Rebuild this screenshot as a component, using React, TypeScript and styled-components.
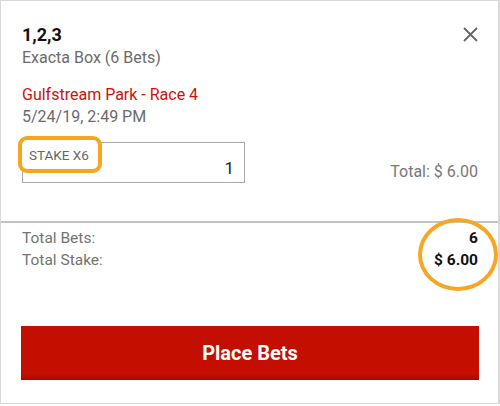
import React from "react";
import styled, { createGlobalStyle } from "styled-components";

const Global = createGlobalStyle`
  html, body { margin: 0; padding: 0; background: #fff; }
  body { font-family: Roboto, "Noto Sans", Arial, sans-serif; }
`;

const Card = styled.div`
  box-sizing: border-box;
  width: 500px;
  height: 404px;
  border: 1px solid #d8d8d8;
  border-right-width: 2px;
  background: #fff;
  display: flex;
  flex-direction: column;
`;

const Top = styled.section`
  padding: 22px 20px 0 21px;
  height: 220px;
  box-sizing: border-box;
  display: flex;
  flex-direction: column;
`;

const HeaderRow = styled.div`
  display: flex;
  justify-content: space-between;
  align-items: flex-start;
`;

const Title = styled.div`
  font-size: 18px;
  font-weight: 700;
  color: #111;
  line-height: 24px;
`;

const Sub = styled.div<{ $color?: string }>`
  font-size: 16px;
  line-height: 22px;
  color: ${(p) => p.$color || "#6b6b6b"};
`;

const EventBlock = styled.div`
  margin-top: 15px;
`;

const CloseBtn = styled.button`
  border: none;
  background: none;
  padding: 0;
  margin: 3px 0 0 0;
  width: 16px;
  height: 16px;
  display: flex;
  align-items: center;
  justify-content: center;
`;

const StakeRow = styled.div`
  margin-top: 14px;
  display: flex;
  justify-content: space-between;
  align-items: flex-end;
`;

const StakeBox = styled.div`
  position: relative;
  box-sizing: border-box;
  width: 223px;
  height: 41px;
  border: 1px solid #aaa;
  display: flex;
  align-items: flex-end;
  justify-content: flex-end;
  padding: 0 10px 3px 0;
`;

const StakeLabel = styled.span`
  position: absolute;
  left: -5px;
  top: -7px;
  box-sizing: border-box;
  height: 37px;
  padding: 0 9px 0 7px;
  display: flex;
  align-items: center;
  background: #fff;
  border: 4px solid #f6a623;
  border-radius: 9px;
  font-size: 13.5px;
  color: #666;
`;

const StakeValue = styled.span`
  font-size: 17px;
  color: #222;
  line-height: 22px;
`;

const TotalText = styled.div`
  font-size: 16px;
  color: #777;
  line-height: 18px;
  margin-bottom: 2px;
`;

const Divider = styled.hr`
  margin: 0;
  border: none;
  height: 2px;
  background: #c2c2c2;
`;

const Summary = styled.section`
  position: relative;
  padding: 4px 20px 0 21px;
  display: flex;
  flex-direction: column;
`;

const SumRow = styled.div`
  display: flex;
  justify-content: space-between;
  font-size: 15.5px;
  line-height: 22px;
`;

const SumLabel = styled.span`
  color: #737373;
`;

const SumValue = styled.span`
  color: #111;
  font-weight: 700;
`;

const Ring = styled.span`
  position: absolute;
  right: 0px;
  top: -5px;
  width: 80px;
  height: 73px;
  box-sizing: border-box;
  border: 4px solid #f6a623;
  border-radius: 50%;
`;

const PlaceButton = styled.button`
  margin: 55px 19px 0 20px;
  height: 54px;
  border: none;
  background: linear-gradient(to bottom, #c40e00 0%, #c40e00 88%, #a50c00 100%);
  color: #fff;
  font-family: Roboto, Arial, sans-serif;
  font-size: 20px;
  font-weight: 700;
  cursor: pointer;
`;

export default function App() {
  return (
    <>
      <Global />
      <Card>
        <Top>
          <HeaderRow>
            <div>
              <Title>1,2,3</Title>
              <Sub>Exacta Box (6 Bets)</Sub>
            </div>
            <CloseBtn aria-label="Close">
              <svg width="15" height="15" viewBox="0 0 15 15">
                <path d="M1 1 L14 14 M14 1 L1 14" stroke="#666" strokeWidth="1.8" />
              </svg>
            </CloseBtn>
          </HeaderRow>
          <EventBlock>
            <Sub $color="#d0100c">Gulfstream Park - Race 4</Sub>
            <Sub>5/24/19, 2:49 PM</Sub>
          </EventBlock>
          <StakeRow>
            <StakeBox>
              <StakeLabel>STAKE X6</StakeLabel>
              <StakeValue>1</StakeValue>
            </StakeBox>
            <TotalText>Total: $ 6.00</TotalText>
          </StakeRow>
        </Top>
        <Divider />
        <Summary>
          <Ring />
          <SumRow>
            <SumLabel>Total Bets:</SumLabel>
            <SumValue>6</SumValue>
          </SumRow>
          <SumRow>
            <SumLabel>Total Stake:</SumLabel>
            <SumValue>$ 6.00</SumValue>
          </SumRow>
        </Summary>
        <PlaceButton>Place Bets</PlaceButton>
      </Card>
    </>
  );
}
